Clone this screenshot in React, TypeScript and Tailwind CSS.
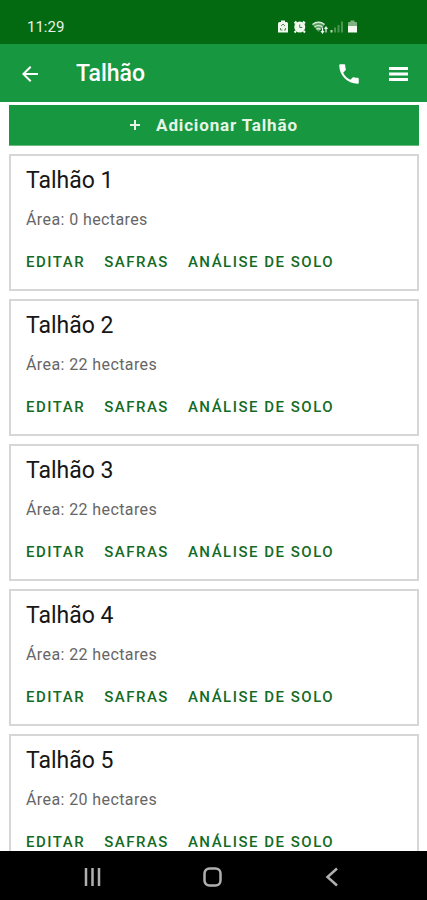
import { MdArrowBack, MdPhone } from "react-icons/md";

interface Field {
  id: number;
  name: string;
  hectares: number;
}

const FIELDS: Field[] = [
  { id: 1, name: "Talhão 1", hectares: 0 },
  { id: 2, name: "Talhão 2", hectares: 22 },
  { id: 3, name: "Talhão 3", hectares: 22 },
  { id: 4, name: "Talhão 4", hectares: 22 },
  { id: 5, name: "Talhão 5", hectares: 20 },
];

const ACTIONS = ["Editar", "Safras", "Análise de solo"];

const StatusIcons = () => (
  <svg width="80" height="16" viewBox="0 0 80 16" fill="none" aria-hidden="true">
    {/* recycle battery */}
    <path d="M3 1.500h4V3h1.500A1.500 1.500 0 0 1 10 4.500v9H0v-9A1.500 1.500 0 0 1 1.500 3H3z" fill="#f0f7ee" />
    <path d="M3 7 5 5l2 2M2.500 9v2h2M7.500 9v2h-1.500" stroke="#4f9455" strokeWidth="1" />
    {/* alarm */}
    <path d="m16.500 4.500 2-2M25 2.500l2 2M18 12l-1.500 1.500M25.500 12l1.500 1.500" stroke="#f0f7ee" strokeWidth="2" />
    <circle cx="21.750" cy="8" r="5.500" fill="#f0f7ee" />
    <path d="M21.750 5.500v3h2.500" stroke="#3b8541" strokeWidth="1" />
    {/* wifi */}
    <path d="M34.500 5.500q6-4.500 12 0M36.500 8q4-3 8 0M38.500 10.300q2-1.500 4 0" stroke="#f0f7ee" strokeWidth="1.500" />
    <path d="M34 5.500q6.500-5 13 0L40.500 13z" fill="#a8cfa9" fillOpacity="0.5" />
    <path d="M44.500 8.500v5M43 12l1.500 2 1.500-2M48 13.500v-5M46.500 10l1.500-2 1.500 2" stroke="#f0f7ee" strokeWidth="1.200" />
    {/* signal */}
    <path d="M53.500 11v2.500" stroke="#b9dab9" strokeWidth="2" />
    <path d="M57 8.500v5M60.500 6v7.500M64 2.500v11" stroke="#4b954f" strokeWidth="2" />
    {/* battery */}
    <path d="M72.500 1.500h4V3h1.500a1 1 0 0 1 1 1v3h-9V4a1 1 0 0 1 1-1h1.500z" fill="#7fb382" />
    <path d="M70 7h9v6.500H70z" fill="#f4faf2" />
  </svg>
);

const StatusBar = () => (
  <div className="flex h-11 shrink-0 items-center justify-between bg-[#046a12] pt-2.5 pr-[69px] pl-[27px]">
    <span className="text-[15px] leading-5 text-[#e8f3e6]">11:29</span>
    <StatusIcons />
  </div>
);

const Header = () => (
  <header className="flex h-[58px] shrink-0 items-center bg-[#17973f] px-[18px] pt-0.5 text-white">
    <button type="button" aria-label="Voltar">
      <MdArrowBack size={24} />
    </button>
    <h1 className="ml-[34px] text-[23px] leading-7 font-medium">Talhão</h1>
    <div className="ml-auto flex items-center gap-[26px]">
      <button type="button" aria-label="Ligar">
        <MdPhone size={26} />
      </button>
      <button type="button" aria-label="Menu">
        <svg width="21" height="16" viewBox="0 0 21 16" fill="currentColor" aria-hidden="true">
          <path d="M1 1h19v3H1zM1 6.500h19v3H1zM1 12h19v3H1z" />
        </svg>
      </button>
    </div>
  </header>
);

const FieldCard = ({ field }: { field: Field }) => (
  <li className="border-2 border-[#d6d6d6] bg-white px-[15px] pt-[11px] pb-[17px]">
    <h2 className="text-[23px] leading-7 text-[#171717]">{field.name}</h2>
    <p className="mt-[15px] text-base leading-5 tracking-wide text-[#666666]">
      Área: {field.hectares} hectares
    </p>
    <div className="mt-[22px] flex gap-[19px]">
      {ACTIONS.map((action) => (
        <button
          key={action}
          type="button"
          className="text-[15px] leading-5 font-medium tracking-widest text-[#146b25] uppercase"
        >
          {action}
        </button>
      ))}
    </div>
  </li>
);

const NavigationBar = () => (
  <nav className="flex h-[49px] shrink-0 items-center justify-around bg-black px-[33px] pt-0.5 text-[#b0b0b0]">
    <button type="button" aria-label="Recentes">
      <svg width="20" height="20" viewBox="0 0 20 20" fill="none" stroke="currentColor" strokeWidth="2.500">
        <path d="M3 1v18M9.500 1v18M16 1v18" />
      </svg>
    </button>
    <button type="button" aria-label="Início">
      <svg width="20" height="20" viewBox="0 0 20 20" fill="none" stroke="currentColor" strokeWidth="2.500">
        <rect x="1.500" y="1.500" width="16" height="17" rx="5" />
      </svg>
    </button>
    <button type="button" aria-label="Voltar ao anterior">
      <svg width="20" height="20" viewBox="0 0 20 20" fill="none" stroke="currentColor" strokeWidth="2.500">
        <path d="M13 1.500 3.500 10l9.500 8.500" />
      </svg>
    </button>
  </nav>
);

export default function App() {
  return (
    <div className="flex h-screen flex-col bg-white font-[Roboto,sans-serif]">
      <StatusBar />
      <Header />
      <main className="min-h-0 flex-1 overflow-y-auto pt-[3px] pr-2 pl-[9px] [scrollbar-width:none]">
        <button
          type="button"
          className="flex h-[41px] w-full items-center justify-center gap-4 border-b border-[#6dbb80] bg-[#17973f] text-[17px] leading-5 font-bold tracking-wider text-[#e6f5e6]"
        >
          <svg width="10" height="10" viewBox="0 0 10 10" stroke="currentColor" strokeWidth="2" aria-hidden="true">
            <path d="M5 0v10M0 5h10" />
          </svg>
          Adicionar Talhão
        </button>
        <ul className="mt-2 flex flex-col gap-2">
          {FIELDS.map((field) => (
            <FieldCard key={field.id} field={field} />
          ))}
        </ul>
      </main>
      <NavigationBar />
    </div>
  );
}
